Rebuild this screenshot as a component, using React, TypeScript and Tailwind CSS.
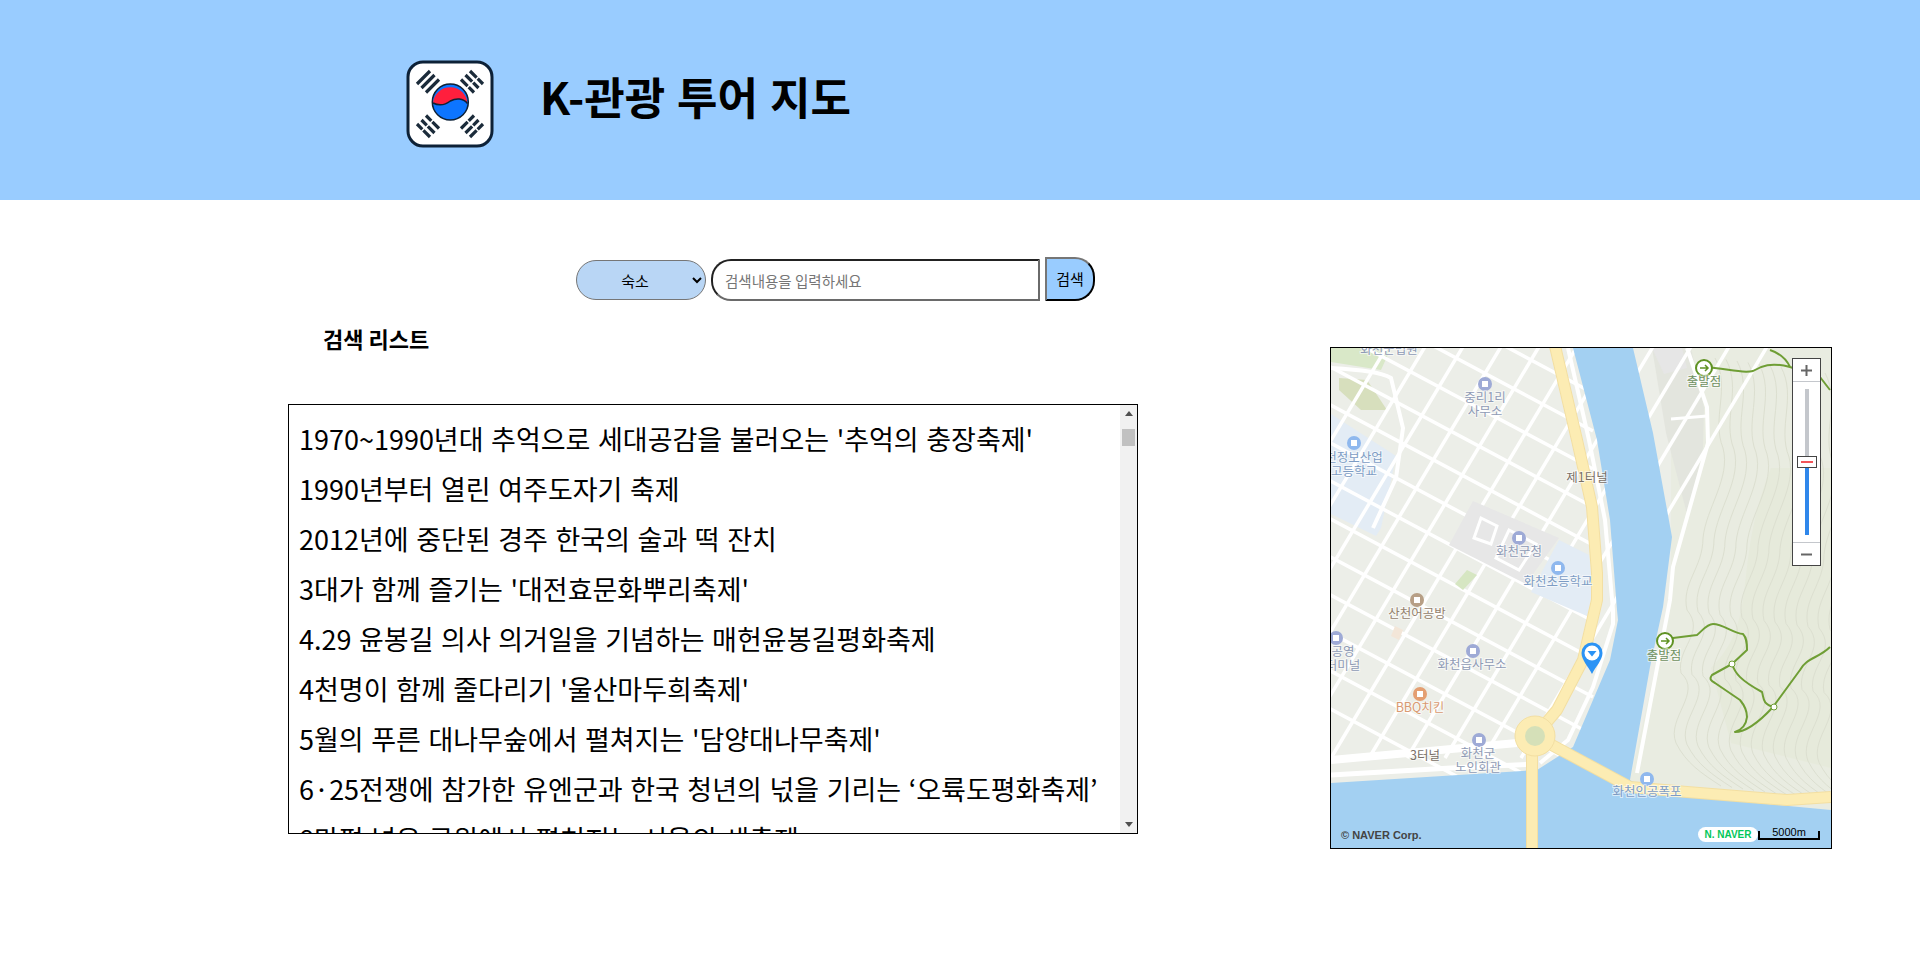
import React from 'react'

const festivals = [
  "1970~1990년대 추억으로 세대공감을 불러오는 '추억의 충장축제'",
  '1990년부터 열린 여주도자기 축제',
  '2012년에 중단된 경주 한국의 술과 떡 잔치',
  "3대가 함께 즐기는 '대전효문화뿌리축제'",
  '4.29 윤봉길 의사 의거일을 기념하는 매헌윤봉길평화축제',
  "4천명이 함께 줄다리기 '울산마두희축제'",
  "5월의 푸른 대나무숲에서 펼쳐지는 '담양대나무축제'",
  '6·25전쟁에 참가한 유엔군과 한국 청년의 넋을 기리는 ‘오륙도평화축제’',
  '8만평 넓은 공원에서 펼쳐지는 서울의 새축제',
]

const labels: [string, number, number, string][] = [
  ['화천군법원', 58, 3, '#8f9bb5'],
  ['중리1리', 154, 51, '#8f9bb5'],
  ['사무소', 154, 65, '#8f9bb5'],
  ['천정보산업', 23, 111, '#7d9cc4'],
  ['고등학교', 23, 125, '#7d9cc4'],
  ['제1터널', 256, 131, '#7a6f66'],
  ['화천군청', 188, 205, '#8f9bb5'],
  ['화천초등학교', 227, 235, '#7d9cc4'],
  ['산천어공방', 86, 267, '#94816d'],
  ['화천읍사무소', 141, 318, '#8f9bb5'],
  ['BBQ치킨', 89, 361, '#d99a72'],
  ['3터널', 94, 409, '#7a6f66'],
  ['화천군', 147, 407, '#8f9bb5'],
  ['노인회관', 147, 421, '#8f9bb5'],
  ['화천인공폭포', 316, 445, '#7d9cc4'],
  ['출발점', 373, 35, '#6f9160'],
  ['출발점', 333, 309, '#6f9160'],
  ['공영', 12, 305, '#8f9bb5'],
  ['터미널', 12, 319, '#8f9bb5'],
]

const pois: [number, number, string][] = [
  [154, 36, '#9eaad6'],
  [23, 95, '#8fb8ee'],
  [188, 190, '#9eaad6'],
  [227, 220, '#8fb8ee'],
  [86, 252, '#b79f86'],
  [142, 303, '#9eaad6'],
  [89, 346, '#e49f72'],
  [148, 392, '#9eaad6'],
  [316, 431, '#8fb8ee'],
  [5, 290, '#9eaad6'],
]

function Flag() {
  return (
    <svg width="88" height="88" viewBox="0 0 88 88">
      <rect x="2" y="2" width="84" height="84" rx="15" fill="#fff" stroke="#0d2137" strokeWidth="3" />
      <g stroke="#1b2b3a" strokeWidth="3.200">
        <path d="M11 24 L24 11 M15.500 28 L28.500 15 M20 32.500 L33 19.500" />
        <path d="M11 64 L24 77 M15.500 60 L28.500 73 M20 55.500 L33 68.500" strokeDasharray="7.500 1.500 9.500" />
        <path d="M77 24 L64 11 M72.500 28 L59.500 15 M68 32.500 L55 19.500" strokeDasharray="7.500 1.500 9.500" />
        <path d="M77 64 L64 77 M72.500 60 L59.500 73 M68 55.500 L55 68.500" strokeDasharray="7.500 1.500 9.500" />
      </g>
      <circle cx="44.300" cy="42" r="18" fill="#0d75ff" stroke="#0d2137" strokeWidth="1.500" />
      <path d="M27 43 A17.300 17.300 0 0 1 61.500 43.500 C57 38 50 38 44.300 41 C38 46 33 46 27 43 Z" fill="#ff1f3d" />
      <path d="M27 43 C33 46 38 46 44.300 41 C50 38 57 38 61.500 43.500" fill="none" stroke="#0d2137" strokeWidth="1.500" />
    </svg>
  )
}

function MapView() {
  // street grid west of the river
  const down = [-100, -62, -24, 14, 52, 90, 128, 166, 204, 242, 280, 318, 356]
  const up = [60, 98, 136, 174, 212, 250, 288, 326, 364, 402, 440]
  const contours = [0, 1, 2, 3, 4, 5, 6, 7, 8, 9, 10, 11, 12, 13]

  return (
    <svg width="500" height="500" viewBox="0 0 500 500" className="block">
      <rect width="500" height="500" fill="#eceee8" />

      {/* hill on the east bank */}
      <path d="M340 0 H500 V462 L320 445 L299 432 L340 250 Z" fill="#e9ece1" />
      <path d="M440 120 C400 220 430 270 380 320 L400 395 L500 420 V120 Z" fill="#e6eadb" />
      {contours.map((i) => (
        <path
          key={i}
          d="M384 10 C400 40 380 70 392 100 C400 130 375 160 372 190 C372 220 350 235 356 262 C375 285 345 300 350 325 C372 345 335 370 345 395 C355 415 370 425 390 438"
          transform={`translate(${i * 11} ${i * 1.5})`}
          fill="none"
          stroke="#dcdfd0"
          strokeWidth="1"
        />
      ))}
      <path d="M321 0 L360 0 L373 60 L372 100 L357 170 L335 85 Z" fill="#e3e5de" />
      <path d="M321 0 H351 L356 20 L333 26 Z" fill="#e6e6e6" />
      <path d="M340 71 L376 68" stroke="#fff" strokeWidth="3" />

      {/* zones */}
      <path d="M0 0 H60 L50 22 L0 14 Z" fill="#d9e8c8" />
      <path d="M8 30 L36 32 L56 62 L30 62 L8 42 Z" fill="#d7dfbd" />
      <path d="M0 66 L65 108 L50 180 L45 188 L0 166 Z" fill="#e3ecf5" />

      {/* streets */}
      <g stroke="#ffffff" strokeWidth="3.500" fill="none">
        {down.map((y) => (
          <line key={y} x1="-10" y1={y} x2="262" y2={y + 145} />
        ))}
        {up.map((x) => (
          <line key={x} x1={x} y1="-8" x2={x - 250} y2="410" />
        ))}
      </g>
      <path d="M0 20 C30 22 50 24 60 30 L72 80 L65 130 L42 180" fill="none" stroke="#fff" strokeWidth="4" />
      <path d="M142 153 L228 190 L195 236 L118 197 Z" fill="#e7e7e7" />
      <path d="M150 170 L166 178 L160 196 L143 190 Z M178 182 L205 196 L188 222 L165 210 Z" fill="none" stroke="#fff" strokeWidth="3" />
      <path d="M228 192 L258 207 L262 240 L256 268 L200 244 Z" fill="#e3ecf5" />
      <path d="M136 222 L146 227 L132 242 L124 236 Z" fill="#d6e6c2" />
      <path d="M64 278 L72 282 L68 292 L60 288 Z" fill="#f3e6d8" />

      {/* river */}
      <path
        d="M242 0 H302 L322 85 L341 189 L332 259 L319 319 L299 432 L320 445 L500 462 V500 H0 V435 L206 422 L242 399 L279 312 L287 272 L286 262 L279 172 L266 92 Z"
        fill="#a3d0f2"
      />
      <path d="M0 412 L186 395" stroke="#fff" strokeWidth="8" fill="none" />
      <path d="M0 427 L120 420 L206 416" stroke="#fff" strokeWidth="5" fill="none" />
      <path d="M237 0 L258 92 L274 172 L282 262 L282 276 L262 339 L237 392 L209 415" stroke="#fff" strokeWidth="4" fill="none" />
      <path d="M356 0 L376 59 L377 95 L342 219 L339 252 L306 425" stroke="#fff" strokeWidth="4" fill="none" />

      {/* main roads */}
      <g fill="none" strokeLinejoin="round" strokeLinecap="butt">
        <g stroke="#f3dfa2" strokeWidth="12">
          <path d="M224 -2 L246 92 L261 159 L266 225 L266 252 L252 312 L226 362 L204 388" />
          <path d="M201 388 V500" />
          <path d="M204 388 L299 439 L356 444 L456 452 L500 449" />
        </g>
        <g stroke="#fcecb3" strokeWidth="10">
          <path d="M224 -2 L246 92 L261 159 L266 225 L266 252 L252 312 L226 362 L204 388" />
          <path d="M201 388 V500" />
          <path d="M204 388 L299 439 L356 444 L456 452 L500 449" />
        </g>
      </g>
      <circle cx="204" cy="388" r="20" fill="#fcecb3" stroke="#f3dfa2" />
      <circle cx="204" cy="388" r="10" fill="#d5e0b8" />

      {/* trails */}
      <g fill="none" stroke="#6f9e35" strokeWidth="2" strokeLinejoin="round">
        <path d="M373 19 C395 20 410 26 422 23 C430 18 440 14 459 19 M439 2 C448 5 455 10 459 19 M459 19 L489 29 L499 42" />
        <path d="M342 290 L366 287 C372 282 376 276 382 276 C392 276 402 285 412 286 C416 290 416 296 416 302 L401 316 L381 327 C378 331 380 333 384 335 L409 352 C414 358 416 362 416 369 C415 378 410 382 404 384 C416 384 430 372 442 359 L469 322 C475 310 488 310 499 299" />
        <path d="M401 316 C404 325 409 332 431 344 C433 350 431 356 443 359" />
      </g>
      <circle cx="401" cy="316" r="3" fill="#fff" stroke="#6f9e35" />
      <circle cx="443" cy="359" r="3" fill="#fff" stroke="#6f9e35" />
      <circle cx="373" cy="20" r="8" fill="#fff" stroke="#5f9223" strokeWidth="2" />
      <path d="M369 20 H377 M374 17 L377 20 L374 23" stroke="#5f9223" strokeWidth="1.500" fill="none" />
      <circle cx="334" cy="293" r="8" fill="#fff" stroke="#5f9223" strokeWidth="2" />
      <path d="M330 293 H338 M335 290 L338 293 L335 296" stroke="#5f9223" strokeWidth="1.500" fill="none" />

      {pois.map(([x, y, c]) => (
        <g key={`${x}-${y}`}>
          <circle cx={x} cy={y} r="7" fill={c} />
          <rect x={x - 3} y={y - 3} width="6" height="6" fill="#fff" />
        </g>
      ))}
      {labels.map(([t, x, y, c], i) => (
        <text
          key={i}
          x={x}
          y={y}
          fontSize="12.500"
          fill={c}
          stroke="#fff"
          strokeOpacity="0.6"
          strokeWidth="2"
          paintOrder="stroke"
          textAnchor="middle"
          dominantBaseline="middle"
          fontFamily="'Noto Sans CJK KR', sans-serif"
        >
          {t}
        </text>
      ))}

      {/* marker */}
      <path d="M250.500 305 A10.500 10.500 0 1 1 271.500 305 C271.500 312 265 318 261 326 C257 318 250.500 312 250.500 305 Z" fill="#2b93f5" />
      <circle cx="261" cy="305" r="7.500" fill="#fff" />
      <path d="M256.500 303 H265.500 L261 308.500 Z" fill="#2b93f5" />
    </svg>
  )
}

function ZoomControl() {
  return (
    <div className="absolute right-[10px] top-[10px] w-[29px] h-[208px] bg-white border border-[#444] flex flex-col items-center">
      <div className="h-[23px] w-full flex items-center justify-center border-b border-[#c4c7cc]">
        <svg width="11" height="11" viewBox="0 0 11 11"><path d="M0 5.500 H11 M5.500 0 V11" stroke="#666" strokeWidth="2" /></svg>
      </div>
      <div className="relative flex-1 w-full flex justify-center pt-[7px] pb-[7px]">
        <div className="w-[4px] h-full bg-[#c4c7cc] flex flex-col justify-end">
          <div className="h-[67px] bg-[#2f87eb]" />
        </div>
        <div className="absolute top-[74px] left-[4px] w-[20px] h-[12px] bg-white border border-[#444] flex items-center justify-center">
          <div className="w-[12px] h-[2px] bg-[#f2555a]" />
        </div>
      </div>
      <div className="h-[23px] w-full flex items-center justify-center border-t border-[#c4c7cc]">
        <svg width="11" height="11" viewBox="0 0 11 11"><path d="M0 5.500 H11" stroke="#666" strokeWidth="2" /></svg>
      </div>
    </div>
  )
}

function ScrollStrip() {
  return (
    <div className="w-[17px] shrink-0 h-full bg-[#f1f1f1] flex flex-col items-center pt-[6px]">
      <svg width="8" height="5" viewBox="0 0 8 5"><path d="M0 5 L4 0 L8 5 Z" fill="#505050" /></svg>
      <div className="w-[13px] h-[17px] bg-[#c1c1c1] mt-[13px]" />
      <svg width="8" height="5" viewBox="0 0 8 5" className="mt-auto mb-[6px]"><path d="M0 0 L4 5 L8 0 Z" fill="#505050" /></svg>
    </div>
  )
}

export default function App() {
  return (
    <div className="min-h-[959px] bg-white text-black font-['Noto_Sans_CJK_KR','Noto_Sans',sans-serif]">
      <header className="h-[200px] bg-[#99ccff] flex items-center pl-[406px] gap-[46px]">
        <div className="mt-[8px]">
          <Flag />
        </div>
        <h1 className="text-[44px] font-bold leading-none -mt-[8px] [word-spacing:2px]">K-관광 투어 지도</h1>
      </header>

      <div className="flex items-center min-h-[44px] pl-[576px] gap-[5px] mt-[58px]">
        <select className="w-[130px] h-[40px] rounded-[20px] bg-[#b9d6f5] border border-[#767676] text-[15px] text-center">
          <option>숙소</option>
        </select>
        <input
          placeholder="검색내용을 입력하세요"
          className="w-[329px] h-[42px] pl-[12px] text-[14.5px] border-2 border-t-[#222] border-l-[#222] border-b-[#6a6a6a] border-r-[#6a6a6a] rounded-l-[20px] placeholder:text-[#757575]"
        />
        <button className="w-[50px] h-[44px] -mt-[2px] text-[15px] bg-[#99ccff] border-2 border-t-[#767676] border-l-[#767676] border-b-black border-r-black rounded-r-[20px]">
          검색
        </button>
      </div>

      <div className="flex items-start">
        <div className="w-[1330px] pl-[288px] shrink-0">
          <h2 className="text-[22px] font-bold leading-[26px] pl-[35px] mt-[23px] mb-[53px]">검색 리스트</h2>
          <div className="w-[850px] h-[430px] border border-black flex">
            <div className="flex-1 overflow-hidden pl-[10px] pt-[9px]">
              {festivals.map((f) => (
                <p key={f} className="h-[50px] leading-[50px] text-[27px] whitespace-nowrap [word-spacing:1.5px]">{f}</p>
              ))}
            </div>
            <ScrollStrip />
          </div>
        </div>
        <div className="relative mt-[45px] w-[502px] border border-black">
          <MapView />
          <ZoomControl />
          <span className="absolute left-[10px] bottom-[5px] text-[11px] font-bold text-[#444] font-['Liberation_Sans',sans-serif]">© NAVER Corp.</span>
          <span className="absolute left-[367px] bottom-[6px] w-[60px] h-[15px] rounded-full bg-white text-[10px] font-bold leading-[15px] text-center text-[#03c75a] font-['Liberation_Sans',sans-serif]">N. NAVER</span>
          <div className="absolute left-[427px] bottom-[8px] w-[62px] h-[9px] border-x-2 border-b-2 border-black flex items-center justify-center">
            <span className="text-[11px] leading-none -mt-[4px] font-['Liberation_Sans',sans-serif]">5000m</span>
          </div>
        </div>
      </div>
    </div>
  )
}
